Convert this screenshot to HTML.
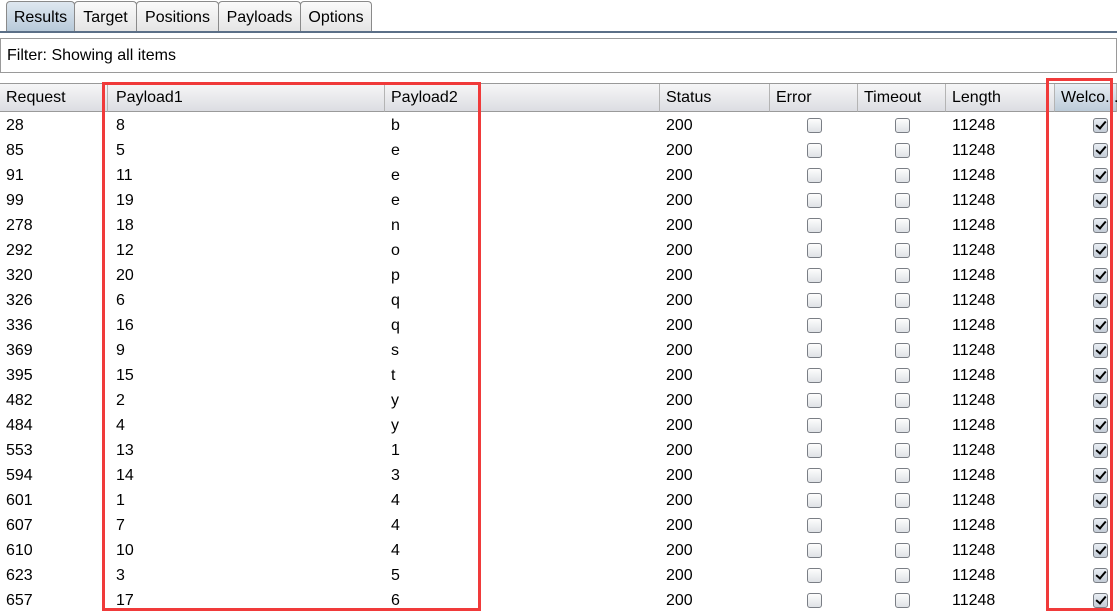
<!DOCTYPE html><html><head><style>
body{margin:0;width:1117px;height:613px;overflow:hidden;background:#fff;font-family:"Liberation Sans",Arial,sans-serif;font-size:16px;color:#000;position:relative}
.a{position:absolute}
.tab{position:absolute;top:1px;height:30px;border:1px solid #8a8a8a;border-bottom:none;border-radius:4px 4px 0 0;background:linear-gradient(#fafafa,#e4e4e4);line-height:31px;text-align:center;font-size:16px}
.hd{position:absolute;top:84px;height:28px;line-height:28px;background:linear-gradient(#f6f6f7,#dcdde2);border-right:1px solid #b4b4b4;border-bottom:1px solid #9a9a9a;box-sizing:border-box;padding-left:6px}
table{position:absolute;top:113px;left:0;border-collapse:collapse;table-layout:fixed}
td{height:25px;padding:0 0 0 6px;font-size:16px;white-space:nowrap}
.cb{display:inline-block;width:13px;height:13px;border:1px solid #7a7e85;border-radius:3px;background:linear-gradient(#fdfdfd,#dfe2e6);vertical-align:middle;position:relative}
.ck{background:linear-gradient(#e8edf3,#c4ccd6);}
.ck:after{content:"";position:absolute;left:4px;top:0px;width:4px;height:8px;border:solid #000;border-width:0 2px 2px 0;transform:rotate(40deg)}
.c{text-align:center;padding:0}
.red{position:absolute;border:3px solid #f03a3a;box-sizing:border-box}
</style></head><body>
<div class="tab" style="left:6px;width:67px;background:linear-gradient(#dfe8f0,#b6c8d8)">Results</div>
<div class="tab" style="left:74px;width:61px">Target</div>
<div class="tab" style="left:136px;width:81px">Positions</div>
<div class="tab" style="left:218px;width:81px">Payloads</div>
<div class="tab" style="left:300px;width:70px">Options</div>
<div class="a" style="left:0;top:31px;width:1117px;height:2px;background:#5b6f87"></div>
<div class="a" style="left:0;top:38px;width:1117px;height:35px;border:1px solid #9a9a9a;box-sizing:border-box;line-height:34px;padding-left:6px">Filter: Showing all items</div>
<div class="a" style="left:0;top:83px;width:1117px;height:1px;background:#999"></div>
<div class="hd" style="left:0;width:108px">Request</div>
<div class="hd" style="left:108px;width:277px;padding-left:8px">Payload1</div>
<div class="hd" style="left:385px;width:275px">Payload2</div>
<div class="hd" style="left:660px;width:110px">Status</div>
<div class="hd" style="left:770px;width:88px">Error</div>
<div class="hd" style="left:858px;width:88px">Timeout</div>
<div class="hd" style="left:946px;width:109px">Length</div>
<div class="hd" style="left:1055px;width:62px;background:linear-gradient(#e8eef4,#bccbd9)">Welco...</div>
<table>
<colgroup><col style="width:108px"><col style="width:277px"><col style="width:275px"><col style="width:110px"><col style="width:88px"><col style="width:88px"><col style="width:109px"><col style="width:62px"></colgroup>
<tr><td>28</td><td style="padding-left:8px">8</td><td>b</td><td>200</td><td class="c"><span class="cb"></span></td><td class="c"><span class="cb"></span></td><td>11248</td><td style="text-align:right;padding-right:9px"><span class="cb ck"></span></td></tr>
<tr><td>85</td><td style="padding-left:8px">5</td><td>e</td><td>200</td><td class="c"><span class="cb"></span></td><td class="c"><span class="cb"></span></td><td>11248</td><td style="text-align:right;padding-right:9px"><span class="cb ck"></span></td></tr>
<tr><td>91</td><td style="padding-left:8px">11</td><td>e</td><td>200</td><td class="c"><span class="cb"></span></td><td class="c"><span class="cb"></span></td><td>11248</td><td style="text-align:right;padding-right:9px"><span class="cb ck"></span></td></tr>
<tr><td>99</td><td style="padding-left:8px">19</td><td>e</td><td>200</td><td class="c"><span class="cb"></span></td><td class="c"><span class="cb"></span></td><td>11248</td><td style="text-align:right;padding-right:9px"><span class="cb ck"></span></td></tr>
<tr><td>278</td><td style="padding-left:8px">18</td><td>n</td><td>200</td><td class="c"><span class="cb"></span></td><td class="c"><span class="cb"></span></td><td>11248</td><td style="text-align:right;padding-right:9px"><span class="cb ck"></span></td></tr>
<tr><td>292</td><td style="padding-left:8px">12</td><td>o</td><td>200</td><td class="c"><span class="cb"></span></td><td class="c"><span class="cb"></span></td><td>11248</td><td style="text-align:right;padding-right:9px"><span class="cb ck"></span></td></tr>
<tr><td>320</td><td style="padding-left:8px">20</td><td>p</td><td>200</td><td class="c"><span class="cb"></span></td><td class="c"><span class="cb"></span></td><td>11248</td><td style="text-align:right;padding-right:9px"><span class="cb ck"></span></td></tr>
<tr><td>326</td><td style="padding-left:8px">6</td><td>q</td><td>200</td><td class="c"><span class="cb"></span></td><td class="c"><span class="cb"></span></td><td>11248</td><td style="text-align:right;padding-right:9px"><span class="cb ck"></span></td></tr>
<tr><td>336</td><td style="padding-left:8px">16</td><td>q</td><td>200</td><td class="c"><span class="cb"></span></td><td class="c"><span class="cb"></span></td><td>11248</td><td style="text-align:right;padding-right:9px"><span class="cb ck"></span></td></tr>
<tr><td>369</td><td style="padding-left:8px">9</td><td>s</td><td>200</td><td class="c"><span class="cb"></span></td><td class="c"><span class="cb"></span></td><td>11248</td><td style="text-align:right;padding-right:9px"><span class="cb ck"></span></td></tr>
<tr><td>395</td><td style="padding-left:8px">15</td><td>t</td><td>200</td><td class="c"><span class="cb"></span></td><td class="c"><span class="cb"></span></td><td>11248</td><td style="text-align:right;padding-right:9px"><span class="cb ck"></span></td></tr>
<tr><td>482</td><td style="padding-left:8px">2</td><td>y</td><td>200</td><td class="c"><span class="cb"></span></td><td class="c"><span class="cb"></span></td><td>11248</td><td style="text-align:right;padding-right:9px"><span class="cb ck"></span></td></tr>
<tr><td>484</td><td style="padding-left:8px">4</td><td>y</td><td>200</td><td class="c"><span class="cb"></span></td><td class="c"><span class="cb"></span></td><td>11248</td><td style="text-align:right;padding-right:9px"><span class="cb ck"></span></td></tr>
<tr><td>553</td><td style="padding-left:8px">13</td><td>1</td><td>200</td><td class="c"><span class="cb"></span></td><td class="c"><span class="cb"></span></td><td>11248</td><td style="text-align:right;padding-right:9px"><span class="cb ck"></span></td></tr>
<tr><td>594</td><td style="padding-left:8px">14</td><td>3</td><td>200</td><td class="c"><span class="cb"></span></td><td class="c"><span class="cb"></span></td><td>11248</td><td style="text-align:right;padding-right:9px"><span class="cb ck"></span></td></tr>
<tr><td>601</td><td style="padding-left:8px">1</td><td>4</td><td>200</td><td class="c"><span class="cb"></span></td><td class="c"><span class="cb"></span></td><td>11248</td><td style="text-align:right;padding-right:9px"><span class="cb ck"></span></td></tr>
<tr><td>607</td><td style="padding-left:8px">7</td><td>4</td><td>200</td><td class="c"><span class="cb"></span></td><td class="c"><span class="cb"></span></td><td>11248</td><td style="text-align:right;padding-right:9px"><span class="cb ck"></span></td></tr>
<tr><td>610</td><td style="padding-left:8px">10</td><td>4</td><td>200</td><td class="c"><span class="cb"></span></td><td class="c"><span class="cb"></span></td><td>11248</td><td style="text-align:right;padding-right:9px"><span class="cb ck"></span></td></tr>
<tr><td>623</td><td style="padding-left:8px">3</td><td>5</td><td>200</td><td class="c"><span class="cb"></span></td><td class="c"><span class="cb"></span></td><td>11248</td><td style="text-align:right;padding-right:9px"><span class="cb ck"></span></td></tr>
<tr><td>657</td><td style="padding-left:8px">17</td><td>6</td><td>200</td><td class="c"><span class="cb"></span></td><td class="c"><span class="cb"></span></td><td>11248</td><td style="text-align:right;padding-right:9px"><span class="cb ck"></span></td></tr>
</table>
<div class="red" style="left:102px;top:82px;width:379px;height:529px"></div>
<div class="red" style="left:1046px;top:78px;width:67px;height:533px"></div>
</body></html>
